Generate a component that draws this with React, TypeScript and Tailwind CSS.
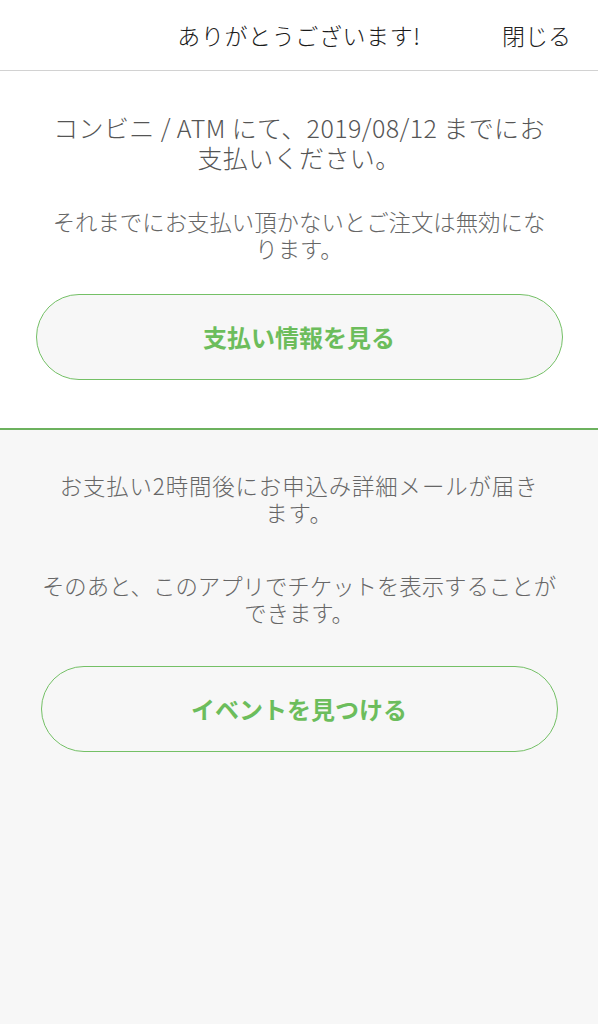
import React from "react";

const font = { fontFamily: '"Noto Sans CJK JP", "Noto Sans", sans-serif' };

export default function App() {
  return (
    <div className="w-[598px] min-h-[1024px] bg-[#f7f7f7] flex flex-col" style={font}>
      <header className="h-[71px] bg-white border-b border-[#d2d2d2] grid grid-cols-[1fr_auto_1fr] items-center">
        <div />
        <div className="text-[23px] text-[#1a1a1a] tracking-[0.6px] font-light">ありがとうございます!</div>
        <div className="flex justify-end pr-[27px] text-[23px] text-[#222] font-light">閉じる</div>
      </header>

      <section className="bg-white pt-[41px] pb-[48px] flex flex-col items-center border-b-2 border-[#6cb15e]">
        <p className="text-[25px] leading-[30px] text-[#555] text-center font-light tracking-[0.4px]">
          コンビニ / ATM にて、2019/08/12 までにお
          <br />
          支払いください。
        </p>
        <p className="mt-[36px] text-[22.4px] leading-[27px] text-[#666] text-center font-light">
          それまでにお支払い頂かないとご注文は無効にな
          <br />
          ります。
        </p>
        <button className="mt-[32px] w-[527px] h-[86px] rounded-full border-[1.5px] border-[#74c066] bg-[#f7f7f7] text-[#6cbd5c] text-[24px] font-bold flex items-center justify-center">
          支払い情報を見る
        </button>
      </section>

      <section className="bg-[#f7f7f7] pt-[42px] flex flex-col items-center">
        <p className="text-[22.4px] leading-[27px] text-[#666] text-center font-light tracking-[0.9px]">
          お支払い2時間後にお申込み詳細メールが届き
          <br />
          ます。
        </p>
        <p className="mt-[46px] text-[22.4px] leading-[27px] text-[#666] text-center font-light">
          そのあと、このアプリでチケットを表示することが
          <br />
          できます。
        </p>
        <button className="mt-[40px] w-[517px] h-[86px] rounded-full border-[1.5px] border-[#74c066] bg-[#f7f7f7] text-[#6cbd5c] text-[24px] font-bold flex items-center justify-center">
          イベントを見つける
        </button>
      </section>
    </div>
  );
}
